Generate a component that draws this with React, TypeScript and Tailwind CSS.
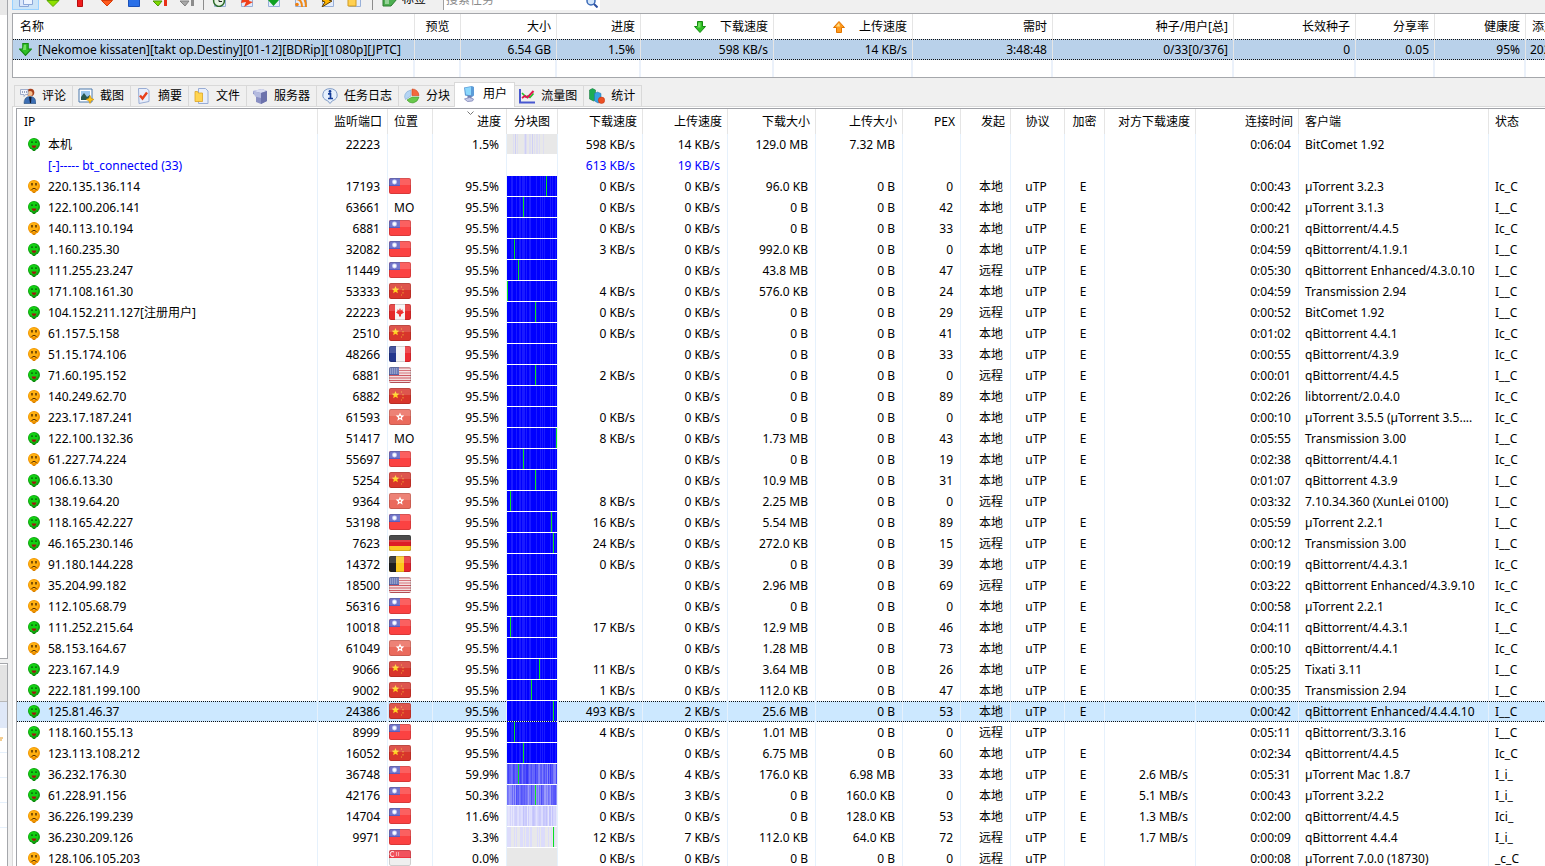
import { useState } from 'react';
import type { ReactNode } from 'react';

interface Peer {
  ip: string;
  happy: boolean;
  port: string;
  loc: string;
  progress: string;
  mark?: number;
  down: string;
  up: string;
  downSize: string;
  upSize: string;
  pex: string;
  origin: string;
  enc: boolean;
  peerDown?: string;
  time: string;
  client: string;
  status: string;
}

type Row = [string, number, string, string, string, number, string, string, string, string, string, string, number, string, string, string, string];

// ip, happy, port, location, progress, mark, down, up, down size, up size, pex, origin, encrypted, peer speed, time, client, status
const ROWS: Row[] = [
  ['220.135.136.114', 0, '17193', 'TW', '95.5', 39, '0', '0', '96.0 KB', '0 B', '0', '本地', 1, '', '0:00:43', 'µTorrent 3.2.3', 'Ic_C'],
  ['122.100.206.141', 1, '63661', 'MO', '95.5', 16, '0', '0', '0 B', '0 B', '42', '本地', 1, '', '0:00:42', 'µTorrent 3.1.3', 'I__C'],
  ['140.113.10.194', 0, '6881', 'TW', '95.5', -1, '0', '0', '0 B', '0 B', '33', '本地', 1, '', '0:00:21', 'qBittorrent/4.4.5', 'Ic_C'],
  ['1.160.235.30', 1, '32082', 'TW', '95.5', 7, '3', '0', '992.0 KB', '0 B', '0', '本地', 1, '', '0:04:59', 'qBittorrent/4.1.9.1', 'I__C'],
  ['111.255.23.247', 1, '11449', 'TW', '95.5', 11, '', '0', '43.8 MB', '0 B', '47', '远程', 1, '', '0:05:30', 'qBittorrent Enhanced/4.3.0.10', 'I__C'],
  ['171.108.161.30', 1, '53333', 'CN', '95.5', 0, '4', '0', '576.0 KB', '0 B', '24', '本地', 1, '', '0:04:59', 'Transmission 2.94', 'I__C'],
  ['104.152.211.127[注册用户]', 1, '22223', 'CA', '95.5', 28, '0', '0', '0 B', '0 B', '29', '远程', 1, '', '0:00:52', 'BitComet 1.92', 'I__C'],
  ['61.157.5.158', 0, '2510', 'CN', '95.5', -1, '0', '0', '0 B', '0 B', '41', '本地', 1, '', '0:01:02', 'qBittorrent 4.4.1', 'Ic_C'],
  ['51.15.174.106', 0, '48266', 'FR', '95.5', -1, '', '0', '0 B', '0 B', '33', '本地', 1, '', '0:00:55', 'qBittorrent/4.3.9', 'Ic_C'],
  ['71.60.195.152', 1, '6881', 'US', '95.5', 28, '2', '0', '0 B', '0 B', '0', '远程', 1, '', '0:00:01', 'qBittorrent/4.4.5', 'I__C'],
  ['140.249.62.70', 0, '6882', 'CN', '95.5', -1, '', '0', '0 B', '0 B', '89', '本地', 1, '', '0:02:26', 'libtorrent/2.0.4.0', 'Ic_C'],
  ['223.17.187.241', 0, '61593', 'HK', '95.5', -1, '0', '0', '0 B', '0 B', '0', '本地', 1, '', '0:00:10', 'µTorrent 3.5.5 (µTorrent 3.5....', 'Ic_C'],
  ['122.100.132.36', 1, '51417', 'MO', '95.5', 49, '8', '0', '1.73 MB', '0 B', '43', '本地', 1, '', '0:05:55', 'Transmission 3.00', 'I__C'],
  ['61.227.74.224', 0, '55697', 'TW', '95.5', 16, '', '0', '0 B', '0 B', '19', '本地', 1, '', '0:02:38', 'qBittorrent/4.4.1', 'Ic_C'],
  ['106.6.13.30', 1, '5254', 'CN', '95.5', 28, '', '0', '10.9 MB', '0 B', '31', '本地', 1, '', '0:01:07', 'qBittorrent 4.3.9', 'I__C'],
  ['138.19.64.20', 1, '9364', 'HK', '95.5', 3, '8', '0', '2.25 MB', '0 B', '0', '远程', 0, '', '0:03:32', '7.10.34.360 (XunLei 0100)', 'I__C'],
  ['118.165.42.227', 1, '53198', 'TW', '95.5', 44, '16', '0', '5.54 MB', '0 B', '89', '本地', 1, '', '0:05:59', 'µTorrent 2.2.1', 'I__C'],
  ['46.165.230.146', 1, '7623', 'DE', '95.5', 46, '24', '0', '272.0 KB', '0 B', '15', '远程', 1, '', '0:00:12', 'Transmission 3.00', 'I__C'],
  ['91.180.144.228', 0, '14372', 'BE', '95.5', -1, '0', '0', '0 B', '0 B', '39', '本地', 1, '', '0:00:19', 'qBittorrent/4.4.3.1', 'Ic_C'],
  ['35.204.99.182', 0, '18500', 'US', '95.5', -1, '', '0', '2.96 MB', '0 B', '69', '远程', 1, '', '0:03:22', 'qBittorrent Enhanced/4.3.9.10', 'Ic_C'],
  ['112.105.68.79', 0, '56316', 'TW', '95.5', -1, '', '0', '0 B', '0 B', '0', '本地', 1, '', '0:00:58', 'µTorrent 2.2.1', 'Ic_C'],
  ['111.252.215.64', 1, '10018', 'TW', '95.5', 3, '17', '0', '12.9 MB', '0 B', '46', '本地', 1, '', '0:04:11', 'qBittorrent/4.4.3.1', 'I__C'],
  ['58.153.164.67', 0, '61049', 'HK', '95.5', -1, '', '0', '1.28 MB', '0 B', '73', '本地', 1, '', '0:00:10', 'qBittorrent/4.4.1', 'Ic_C'],
  ['223.167.14.9', 1, '9066', 'CN', '95.5', 32, '11', '0', '3.64 MB', '0 B', '26', '本地', 1, '', '0:05:25', 'Tixati 3.11', 'I__C'],
  ['222.181.199.100', 1, '9002', 'CN', '95.5', 24, '1', '0', '112.0 KB', '0 B', '47', '本地', 1, '', '0:00:35', 'Transmission 2.94', 'I__C'],
  ['125.81.46.37', 1, '24386', 'CN', '95.5', 46, '493', '2', '25.6 MB', '0 B', '53', '本地', 1, '', '0:00:42', 'qBittorrent Enhanced/4.4.4.10', 'I__C'],
  ['118.160.155.13', 1, '8999', 'TW', '95.5', 7, '4', '0', '1.01 MB', '0 B', '0', '远程', 0, '', '0:05:11', 'qBittorrent/3.3.16', 'I__C'],
  ['123.113.108.212', 0, '16052', 'CN', '95.5', 16, '', '0', '6.75 MB', '0 B', '60', '本地', 1, '', '0:02:34', 'qBittorrent/4.4.5', 'Ic_C'],
  ['36.232.176.30', 1, '36748', 'TW', '59.9', 11, '0', '4', '176.0 KB', '6.98 MB', '33', '本地', 1, '2.6', '0:05:31', 'µTorrent Mac 1.8.7', 'I_i_'],
  ['61.228.91.156', 1, '42176', 'TW', '50.3', 28, '0', '3', '0 B', '160.0 KB', '0', '本地', 1, '5.1', '0:00:43', 'µTorrent 3.2.2', 'I_i_'],
  ['36.226.199.239', 0, '14704', 'TW', '11.6', -1, '0', '0', '0 B', '128.0 KB', '53', '本地', 1, '1.3', '0:02:00', 'qBittorrent/4.4.5', 'Ici_'],
  ['36.230.209.126', 1, '9971', 'TW', '3.3', 46, '12', '7', '112.0 KB', '64.0 KB', '72', '远程', 1, '1.7', '0:00:09', 'qBittorrent 4.4.4', 'I_i_'],
  ['128.106.105.203', 0, '', 'SG', '0.0', -1, '0', '0', '0 B', '0 B', '0', '远程', 0, '', '0:00:08', 'µTorrent 7.0.0 (18730)', '_c_C'],
];

const PEERS: Peer[] = ROWS.map((r) => ({
  ip: r[0],
  happy: r[1] === 1,
  port: r[2],
  loc: r[3],
  progress: r[4],
  mark: r[5] >= 0 ? r[5] : undefined,
  down: r[6] && `${r[6]} KB/s`,
  up: `${r[7]} KB/s`,
  downSize: r[8],
  upSize: r[9],
  pex: r[10],
  origin: r[11],
  enc: r[12] === 1,
  peerDown: r[13] && `${r[13]} MB/s`,
  time: r[14],
  client: r[15],
  status: r[16],
}));

const DOTTED =
  'bg-[image:repeating-linear-gradient(90deg,#111_0_1px,transparent_1px_2px),repeating-linear-gradient(90deg,#111_0_1px,transparent_1px_2px)] bg-[length:100%_1px] bg-[position:0_0,0_100%] bg-no-repeat';

function Face({ happy }: { happy: boolean }) {
  return (
    <svg width="12" height="14" viewBox="0 0 12 14" className="shrink-0">
      <path d="M3 10h6l-2 3H5z" fill={happy ? '#0c8a0c' : '#d98200'} />
      <circle cx="6" cy="6" r="6" fill={happy ? '#0fa00f' : '#f09400'} />
      <circle cx="5.5" cy="5.5" r="4.8" fill={happy ? '#12d012' : '#ffb010'} />
      {happy ? (
        <>
          <path d="M3.200 4.200h1.600M7.200 4.200h1.600" stroke="#064806" strokeWidth="1.200" />
          <path d="M3.500 7.500h5q-.6 2.600-2.500 2.600T3.500 7.500z" fill="#a01414" />
        </>
      ) : (
        <>
          <path d="M4 3v2.500M8 3v2.500" stroke="#4a2a00" strokeWidth="1.4" />
          <path d="M3.500 9.5q2.500-2.500 5 0" stroke="#5a3000" fill="none" />
        </>
      )}
    </svg>
  );
}

function Star({ x, y, r, fill }: { x: number; y: number; r: number; fill: string }) {
  const pts = Array.from({ length: 10 }, (_, i) => {
    const a = (i * Math.PI) / 5 - Math.PI / 2;
    const d = i % 2 ? r * 0.45 : r;
    return `${(x + d * Math.cos(a)).toFixed(2)},${(y + d * Math.sin(a)).toFixed(2)}`;
  });
  return <polygon points={pts.join(' ')} fill={fill} />;
}

const FLAGS: Record<string, ReactNode> = {
  TW: (
    <>
      <rect width="22" height="16" fill="#fb4242" />
      <rect width="11" height="8" fill="#5a5cc0" />
      <circle cx="5.5" cy="4" r="2.4" fill="#c9cff5" />
      <circle cx="5.5" cy="4" r="1.4" fill="#fff" />
    </>
  ),
  CN: (
    <>
      <rect width="22" height="16" fill="#d8352b" />
      <Star x={6.5} y={7} r={4} fill="#ffd21f" />
      <path d="M12 4h1M14 6v1.500M14 9v1.500M12 12h1" stroke="#f0a030" fill="none" />
    </>
  ),
  CA: (
    <>
      <rect width="22" height="16" fill="#e42a2a" />
      <rect x="6" width="10" height="16" fill="#f6f6f6" />
      <path d="M11 4l1 2 2-.5-.5 1.500 1.500 1.500-3 2v2h-2v-2l-3-2 1.500-1.500L8 5.500l2 .5z" fill="#ee3333" />
    </>
  ),
  FR: (
    <>
      <rect width="22" height="16" fill="#f4f4f4" />
      <rect width="7" height="16" fill="#23368c" />
      <rect x="16" width="6" height="16" fill="#ec2b32" />
    </>
  ),
  US: (
    <>
      <rect width="22" height="16" fill="#f3dede" />
      <path d="M0 1h22M0 3.500h22M0 6h22M0 8.500h22M0 11h22M0 13.500h22M0 15.500h22" stroke="#cf5a62" />
      <rect width="10" height="8" fill="#5566aa" />
      <path d="M1 2h8M1 4h8M1 6h8" stroke="#a9b3da" strokeDasharray="1 1" />
    </>
  ),
  HK: (
    <>
      <rect width="22" height="16" fill="#ea6a5c" />
      <Star x={11} y={8} r={4.5} fill="#fff" />
      <circle cx="11" cy="8" r="1" fill="#ea6a5c" />
    </>
  ),
  DE: (
    <>
      <rect width="22" height="16" fill="#2a2a2a" />
      <rect y="5" width="22" height="6" fill="#dd1f26" />
      <rect y="11" width="22" height="5" fill="#fbc924" />
    </>
  ),
  BE: (
    <>
      <rect width="22" height="16" fill="#fcc81c" />
      <rect width="7" height="16" fill="#1f1f1f" />
      <rect x="15" width="7" height="16" fill="#e5252f" />
    </>
  ),
  SG: (
    <>
      <rect width="22" height="16" fill="#efefef" />
      <rect width="22" height="8" fill="#ef3340" />
      <path d="M5 2a2.500 2.500 0 1 0 0 4" stroke="#fff" fill="none" />
      <path d="M7 3h1M9 3h1M7 5h1M9 5h1" stroke="#fff" />
    </>
  ),
};

function Flag({ code }: { code: string }) {
  return (
    <svg width="22" height="16" viewBox="0 0 22 16" className="rounded-xs">
      {FLAGS[code]}
      <rect width="22" height="7" fill="#fff" opacity="0.16" />
      <rect x="0.500" y="0.500" width="21" height="15" rx="1.500" fill="none" stroke="#000" opacity="0.14" />
    </svg>
  );
}

const COMMON = [4, 5, 9, 12, 13, 15, 16, 17, 19, 22, 23, 29, 33, 35, 37, 43, 45, 48];

function PieceMap({ percent, seed, mark }: { percent: number; seed: number; mark?: number }) {
  const cols = Array.from({ length: 50 }, (_, i) => {
    const n = Math.abs(Math.sin((i + 1) * 12.9898 + seed * 78.233) * 43758.5453) % 1;
    if (percent === 0) return '#e8e8e8';
    if (percent > 90) return COMMON.includes(i) ? '#1a1aff' : '#0000ff';
    if (percent > 40) {
      const v = Math.round((1 - percent / 100) * 235 + (n - 0.5) * 80);
      return `rgb(${v},${v},250)`;
    }
    if (percent > 10) {
      const v = Math.round(212 + (n - 0.5) * 40);
      return `rgb(${v},${v},252)`;
    }
    if (percent > 2) return n > 0.45 ? '#dcdcfb' : '#e8e8ea';
    return n > 0.88 ? '#cfcff6' : n > 0.7 ? '#dedef2' : '#e8e8e8';
  });
  return (
    <svg width="50" height="20" viewBox="0 0 50 20" shapeRendering="crispEdges" className="block">
      {cols.map((c, i) => (
        <rect key={i} x={i} width="1" height="20" fill={c} />
      ))}
      {mark !== undefined && <rect x={mark} width="1" height="20" fill="#0be020" />}
    </svg>
  );
}

function DownArrow({ size }: { size: number }) {
  return (
    <svg width={size} height={size} viewBox="0 0 12 12" className="shrink-0">
      <path d="M3.500.5h5v5h3L6 11.500.5 5.500h3z" fill="#2fbf24" stroke="#168a12" />
      <path d="M4.500 1.500h2v5h-3z" fill="#8ff07c" opacity="0.7" />
    </svg>
  );
}

function UpArrow() {
  return (
    <svg width="12" height="12" viewBox="0 0 12 12" className="shrink-0">
      <path d="M3.500 11.500h5v-5h3L6 .5.5 6.500h3z" fill="#ff9a1c" stroke="#e07400" />
      <path d="M6 2L3 5.500h4z" fill="#ffe08a" />
    </svg>
  );
}

function Icon({ children }: { children: ReactNode }) {
  return (
    <svg width="16" height="16" viewBox="0 0 16 16" className="shrink-0">
      {children}
    </svg>
  );
}

const page = <path d="M2.500.5h9l2 2v13h-11z" fill="#e4ecfb" stroke="#98b0d8" />;

const TOOLS: { name: string; icon: ReactNode; active?: boolean }[] = [
  { name: '新建', active: true, icon: <><path d="M1.500 1.500h9v14h-9z" fill="#dbe7fb" stroke="#8ba6d8" /><path d="M5.500.5h9v13h-9z" fill="#eef4ff" stroke="#8ba6d8" /></> },
  { name: '开始', icon: <path d="M2 9.500h12L8 15.500z" fill="#8ee000" stroke="#5aa800" /> },
  { name: '暂停', icon: <path d="M5.500 2.500h5v13h-5z" fill="#ee1c1c" stroke="#b80c0c" /> },
  { name: '停止', icon: <path d="M2.500 9.500h11l-5.500 5.500z" fill="#ff5a1c" stroke="#d83a08" /> },
  { name: '方块', icon: <path d="M2.500 5.500h11v10h-11z" fill="#2a70e8" stroke="#1a50b8" /> },
  { name: '全部开始', icon: <><path d="M0 10h9l-4 5z" fill="#7ed800" stroke="#4a9800" /><path d="M11 6h3v9h-3z" fill="#e83018" /></> },
  { name: '全部停止', icon: <><path d="M0 10h9l-4 5z" fill="#a8a8a8" stroke="#808080" /><path d="M11 6h3v9h-3z" fill="#8c8c8c" /></> },
];

const TOOLS_2: { name: string; icon: ReactNode }[] = [
  { name: '计划', icon: <>{page}<circle cx="7" cy="10" r="5.400" fill="#e8f4e4" stroke="#2a6a28" strokeWidth="1.500" /><path d="M7 7v3.500h3" stroke="#222" fill="none" /></> },
  { name: '热门', icon: <>{page}<path d="M4 5l8 1-2 4 4 1-9 5 2-5-5 1z" fill="#f0401c" /></> },
  { name: '完成', icon: <>{page}<path d="M2 9h3V5h5v4h3l-5.500 6z" fill="#10a020" /></> },
  { name: '订阅', icon: <>{page}<circle cx="4" cy="13.500" r="1.800" fill="#f08010" /><path d="M3 8q6 0 6 8M3 4q10 0 10 12" stroke="#f08a18" fill="none" strokeWidth="2" /></> },
  { name: '快速', icon: <>{page}<path d="M10 3l3 4-4 2 3 1-10 6 3-5-3-1z" fill="#ffb400" stroke="#604000" /></> },
  { name: '目录', icon: <>{page}<path d="M1 6h7l1 2v7H1z" fill="#ffd050" stroke="#d09a20" /></> },
];

const TABS: { name: string; icon: ReactNode }[] = [
  {
    name: '评论',
    icon: (
      <>
        <circle cx="10.500" cy="4.500" r="3.800" fill="#a8401c" />
        <circle cx="10" cy="5.500" r="2.500" fill="#f4c090" />
        <path d="M.5 1.500h7.500v5H5.500L4 8.500v-2H.5z" fill="#f4f6fc" stroke="#8c9cc0" strokeWidth=".8" />
        <path d="M2 4h1M4 4h1M6 4h1" stroke="#405080" />
        <path d="M4 15.500q0-7 6-7t6 7z" fill="#3c6eb4" stroke="#204878" strokeWidth=".6" />
        <path d="M9 9h2.500l-.5 6h-1z" fill="#101830" />
      </>
    ),
  },
  {
    name: '截图',
    icon: (
      <>
        <path d="M1 1h13v13H1z" fill="#fff" stroke="#4a78ac" />
        <path d="M3 3h9v9H3z" fill="#9cc8ec" />
        <path d="M3 9l3-4 3 4 3-2v5H3z" fill="#2a5a50" />
        <path d="M12 7.500l1.200 2.800 2.800 1.200-2.800 1.200L12 15.500l-1.200-2.800L8 11.500l2.800-1.200z" fill="#ffc81c" stroke="#d08c00" strokeWidth=".6" />
      </>
    ),
  },
  {
    name: '摘要',
    icon: (
      <>
        <path d="M2.500.5h8l2.500 2v11l-10 2z" fill="#e8eefb" stroke="#98acd4" />
        <path d="M4 7.500l2.500 3L11 4.500" stroke="#e8401c" strokeWidth="2.400" fill="none" />
      </>
    ),
  },
  {
    name: '文件',
    icon: (
      <>
        <path d="M4.500.5h7l2.500 2.500v12.500h-9.500z" fill="#e8eefb" stroke="#98acd4" />
        <path d="M1 3.500h2.500l.8 1.500h4.200v8.500H1z" fill="#ffd450" stroke="#dca424" strokeWidth=".8" />
      </>
    ),
  },
  {
    name: '服务器',
    icon: (
      <>
        <path d="M1 3l9-2 5 2v10l-6 3-5-2V7L1 6z" fill="#8a90c4" />
        <path d="M1 3l9-2 5 2-6 2z" fill="#d8dcf2" />
        <path d="M1 3l8 2v5L3 8.500z" fill="#b4badf" />
        <path d="M9 5l6-2v10l-6 3z" fill="#6c72ac" />
      </>
    ),
  },
  {
    name: '任务日志',
    icon: (
      <>
        <path d="M8 .7a7.200 6.200 0 0 1 2.500 12L8 15.500l-2.500-2.800A7.200 6.200 0 0 1 8 .7z" fill="#e6f0fd" stroke="#7c98c4" />
        <circle cx="8" cy="3.500" r="1.400" fill="#143c98" />
        <path d="M6 5.800h2.500v4.400M6 10.500h5" stroke="#143c98" strokeWidth="1.700" fill="none" />
      </>
    ),
  },
  {
    name: '分块',
    icon: (
      <>
        <path d="M7 2v6l-5.500 3.500Q0 9 1 6.500 2 3 7 2z" fill="#b4d4f4" stroke="#7ca8d4" strokeWidth=".6" />
        <path d="M8 1q6 0 7 6.500H8z" fill="#f4683c" stroke="#cc4018" strokeWidth=".6" />
        <path d="M8 9h7q-1 5-6 6-4 0-6-3z" fill="#68c84c" stroke="#3c9828" strokeWidth=".6" />
      </>
    ),
  },
  {
    name: '用户',
    icon: (
      <>
        <path d="M3 1.500L11 0l2 1v8.500L11 11 4 9.500z" fill="#5c9cd8" />
        <path d="M4 2l6-1v8.500L5 8.500z" fill="#8cd8fc" />
        <path d="M6.500 9.500h4v2.500h-4z" fill="#7080b0" />
        <path d="M3.500 13l5-1.500 4 1.500-1 2-5 .5z" fill="#c4cae8" stroke="#7c84b8" strokeWidth=".8" />
      </>
    ),
  },
  {
    name: '流量图',
    icon: (
      <>
        <path d="M1 1v13.500h15" stroke="#4858d0" strokeWidth="2" fill="none" />
        <path d="M3 5l4 4 2-1 2 1.500 3.500-4" stroke="#20c428" strokeWidth="1.600" fill="none" />
        <path d="M3 10l3-2 2.500 1.500L14.500 3" stroke="#e01850" strokeWidth="2" fill="none" />
      </>
    ),
  },
  {
    name: '统计',
    icon: (
      <>
        <path d="M.5 2l3-1.500 3 1.500v10l-2 1-4-2z" fill="#1cac54" stroke="#107034" strokeWidth=".5" />
        <path d="M5.500 5.500l3-1.500 3.500 1.500v8.500l-3 1-3.500-2z" fill="#38a0e0" stroke="#1c70ac" strokeWidth=".5" />
        <circle cx="12.500" cy="12.300" r="3.200" fill="#ec5024" stroke="#b83010" strokeWidth=".5" />
      </>
    ),
  },
];

const PEER_HEAD = 'relative h-[25px] border-r border-[#e5e5e5] p-0 font-normal whitespace-nowrap';
const CELL = 'h-[21px] overflow-hidden border-r border-[#e6f1fc] p-0 whitespace-nowrap';
const NUM = `${CELL} pr-[7px] text-right`;
const TASK_HEAD = 'h-[25px] border-r border-[#e5e5e5] p-0 font-normal whitespace-nowrap';
const TASK_NUM = 'h-[21px] border-r border-[#e5e5e5] p-0 pr-[5px] text-right whitespace-nowrap';

function TaskTable() {
  return (
    <div className="shrink-0 overflow-hidden border-y border-l border-[#a5a7ab] bg-white">
      <table className="w-full table-fixed border-separate border-spacing-0">
        <colgroup>
          <col className="w-[402px]" />
          <col className="w-[46px]" />
          <col className="w-[96px]" />
          <col className="w-[84px]" />
          <col className="w-[133px]" />
          <col className="w-[139px]" />
          <col className="w-[140px]" />
          <col className="w-[181px]" />
          <col className="w-[122px]" />
          <col className="w-[79px]" />
          <col className="w-[91px]" />
          <col />
        </colgroup>
        <thead>
          <tr>
            <th className={`${TASK_HEAD} pl-[7px] text-left`}>名称</th>
            <th className={`${TASK_HEAD} text-center`}>预览</th>
            <th className={`${TASK_HEAD} pr-[5px] text-right`}>大小</th>
            <th className={`${TASK_HEAD} pr-[5px] text-right`}>进度</th>
            <th className={`${TASK_HEAD} pr-[5px]`}>
              <span className="flex items-center justify-end gap-[14px]">
                <DownArrow size={12} />
                下载速度
              </span>
            </th>
            <th className={`${TASK_HEAD} pr-[5px]`}>
              <span className="flex items-center justify-end gap-[14px]">
                <UpArrow />
                上传速度
              </span>
            </th>
            <th className={`${TASK_HEAD} pr-[5px] text-right`}>需时</th>
            <th className={`${TASK_HEAD} pr-[5px] text-right`}>种子/用户[总]</th>
            <th className={`${TASK_HEAD} pr-[5px] text-right`}>长效种子</th>
            <th className={`${TASK_HEAD} pr-[5px] text-right`}>分享率</th>
            <th className={`${TASK_HEAD} pr-[5px] text-right`}>健康度</th>
            <th className="overflow-hidden p-0 pl-[6px] text-left font-normal whitespace-nowrap">添加</th>
          </tr>
        </thead>
        <tbody>
          <tr className={`bg-[#b9d1ea] ${DOTTED}`}>
            <td className="h-[21px] overflow-hidden border-r border-[#e5e5e5] p-0 pl-[6px] whitespace-nowrap">
              <span className="flex items-center gap-[6px]">
                <DownArrow size={13} />
                [Nekomoe kissaten][takt op.Destiny][01-12][BDRip][1080p][JPTC]
              </span>
            </td>
            <td className={TASK_NUM} />
            <td className={TASK_NUM}>6.54 GB</td>
            <td className={TASK_NUM}>1.5%</td>
            <td className={TASK_NUM}>598 KB/s</td>
            <td className={TASK_NUM}>14 KB/s</td>
            <td className={TASK_NUM}>3:48:48</td>
            <td className={TASK_NUM}>0/33[0/376]</td>
            <td className={TASK_NUM}>0</td>
            <td className={TASK_NUM}>0.05</td>
            <td className={TASK_NUM}>95%</td>
            <td className="overflow-hidden p-0 pl-1 whitespace-nowrap">2022</td>
          </tr>
          <tr>
            {Array.from({ length: 11 }, (_, i) => (
              <td key={i} className="h-[17px] border-r-2 border-[#ebf1fa] p-0" />
            ))}
            <td />
          </tr>
        </tbody>
      </table>
    </div>
  );
}

function PeerTable() {
  const [open, setOpen] = useState(true);
  const [selected, setSelected] = useState('125.81.46.37');

  return (
    <div className="min-h-0 flex-1 overflow-hidden border-t border-l border-[#a0a2a8] bg-white">
      <table className="w-full table-fixed border-separate border-spacing-0">
        <colgroup>
          <col className="w-[301px]" />
          <col className="w-[70px]" />
          <col className="w-[45px]" />
          <col className="w-[74px]" />
          <col className="w-[51px]" />
          <col className="w-[85px]" />
          <col className="w-[85px]" />
          <col className="w-[88px]" />
          <col className="w-[87px]" />
          <col className="w-[58px]" />
          <col className="w-[50px]" />
          <col className="w-[54px]" />
          <col className="w-[40px]" />
          <col className="w-[91px]" />
          <col className="w-[103px]" />
          <col className="w-[190px]" />
          <col />
        </colgroup>
        <thead>
          <tr>
            <th className={`${PEER_HEAD} pl-[7px] text-left`}>IP</th>
            <th className={`${PEER_HEAD} pr-[5px] text-right`}>监听端口</th>
            <th className={`${PEER_HEAD} pl-[6px] text-left`}>位置</th>
            <th className={`${PEER_HEAD} pr-[5px] text-right`}>
              <svg width="7" height="4" viewBox="0 0 7 4" className="absolute top-[2px] left-[34px]">
                <path d="M.5.5l3 3 3-3" stroke="#777" fill="none" />
              </svg>
              进度
            </th>
            <th className={`${PEER_HEAD} text-center`}>分块图</th>
            <th className={`${PEER_HEAD} pr-[5px] text-right`}>下载速度</th>
            <th className={`${PEER_HEAD} pr-[5px] text-right`}>上传速度</th>
            <th className={`${PEER_HEAD} pr-[5px] text-right`}>下载大小</th>
            <th className={`${PEER_HEAD} pr-[5px] text-right`}>上传大小</th>
            <th className={`${PEER_HEAD} pr-[5px] text-right`}>PEX</th>
            <th className={`${PEER_HEAD} pr-[5px] text-right`}>发起</th>
            <th className={`${PEER_HEAD} text-center`}>协议</th>
            <th className={`${PEER_HEAD} text-center`}>加密</th>
            <th className={`${PEER_HEAD} pr-[5px] text-right`}>对方下载速度</th>
            <th className={`${PEER_HEAD} pr-[5px] text-right`}>连接时间</th>
            <th className={`${PEER_HEAD} pl-[6px] text-left`}>客户端</th>
            <th className="p-0 pl-[6px] text-left font-normal whitespace-nowrap">状态</th>
          </tr>
        </thead>
        <tbody>
          <tr>
            <td className={`${CELL} pl-[11px]`}>
              <span className="flex items-center gap-2">
                <Face happy />
                本机
              </span>
            </td>
            <td className={NUM}>22223</td>
            <td className={CELL} />
            <td className={NUM}>1.5%</td>
            <td className={`${CELL} align-top`}>
              <PieceMap percent={1.5} seed={3} />
            </td>
            <td className={NUM}>598 KB/s</td>
            <td className={NUM}>14 KB/s</td>
            <td className={NUM}>129.0 MB</td>
            <td className={NUM}>7.32 MB</td>
            <td className={NUM} />
            <td className={NUM} />
            <td className={NUM} />
            <td className={NUM} />
            <td className={NUM} />
            <td className={NUM}>0:06:04</td>
            <td className={`${CELL} pl-[6px]`}>BitComet 1.92</td>
            <td />
          </tr>
          <tr className="text-[#0000ff]">
            <td className={`${CELL} pl-[31px]`}>
              <button type="button" className="block" onClick={() => setOpen(!open)}>
                {open ? '[-]-----' : '[+]-----'} bt_connected (33)
              </button>
            </td>
            <td className={NUM} />
            <td className={NUM} />
            <td className={NUM} />
            <td className={NUM} />
            <td className={NUM}>613 KB/s</td>
            <td className={NUM}>19 KB/s</td>
            {Array.from({ length: 9 }, (_, i) => (
              <td key={i} className={CELL} />
            ))}
            <td />
          </tr>
          {open &&
            PEERS.map((p, i) => (
              <tr key={p.ip} onClick={() => setSelected(p.ip)} className={p.ip === selected ? `bg-[#cce8ff] ${DOTTED}` : ''}>
                <td className={`${CELL} pl-[11px]`}>
                  <span className="flex items-center gap-2">
                    <Face happy={p.happy} />
                    {p.ip}
                  </span>
                </td>
                <td className={NUM}>{p.port}</td>
                {FLAGS[p.loc] ? (
                  <td className={`${CELL} pt-[2px] pl-px align-top`}>
                    <Flag code={p.loc} />
                  </td>
                ) : (
                  <td className={`${CELL} pl-[6px]`}>{p.loc}</td>
                )}
                <td className={NUM}>{p.progress}%</td>
                <td className={`${CELL} align-top`}>
                  <PieceMap percent={Number(p.progress)} seed={i} mark={p.mark} />
                </td>
                <td className={NUM}>{p.down}</td>
                <td className={NUM}>{p.up}</td>
                <td className={NUM}>{p.downSize}</td>
                <td className={NUM}>{p.upSize}</td>
                <td className={NUM}>{p.pex}</td>
                <td className={NUM}>{p.origin}</td>
                <td className={`${CELL} pr-[3px] text-center`}>uTP</td>
                <td className={`${CELL} pr-[3px] text-center`}>{p.enc && 'E'}</td>
                <td className={NUM}>{p.peerDown}</td>
                <td className={NUM}>{p.time}</td>
                <td className={`${CELL} pl-[6px]`}>{p.client}</td>
                <td className="p-0 pl-[6px] whitespace-nowrap">{p.status}</td>
              </tr>
            ))}
        </tbody>
      </table>
    </div>
  );
}

export default function App() {
  const [tab, setTab] = useState('用户');

  return (
    <div className="flex h-screen overflow-hidden bg-[#f0f0f0] font-['Noto_Sans','Noto_Sans_CJK_SC',sans-serif] text-[12px] leading-4 text-black">
      <aside className="flex w-2 shrink-0 flex-col">
        <div className="h-[15px] shrink-0 border-r border-[#a5a7ab] bg-[#e8e8e8]" />
        <div className="h-[644px] shrink-0 border-r border-b border-[#a5a7ab] bg-white" />
        <div className="mt-1 flex flex-1 flex-col border-t border-r border-[#a5a7ab] bg-white">
          <div className="mt-px h-[37px] shrink-0 border-b border-[#b8b8b8] bg-[#e3e3e3]" />
          <div className="h-[26px] shrink-0 bg-[#dfe8f8]" />
          <div className="flex h-[25px] shrink-0 items-center border-b border-[#e6f1fc]">
            <svg width="3" height="6" viewBox="0 0 3 6">
              <path d="M0 1h3M0 3h2" stroke="#e89a20" />
            </svg>
          </div>
          <div className="h-[25px] shrink-0 border-b border-[#e6f1fc]" />
          <div className="h-[25px] shrink-0 border-b border-[#e6f1fc]" />
          <div className="h-[25px] shrink-0 border-b border-[#e6f1fc]" />
        </div>
      </aside>

      <div className="ml-1 flex min-w-0 flex-1 flex-col">
        <div className="flex h-[13px] shrink-0 items-end overflow-hidden pb-[3px]">
          {TOOLS.map((t) => (
            <button
              key={t.name}
              type="button"
              aria-label={t.name}
              className={`flex h-[25px] w-[27px] shrink-0 items-end justify-center border pb-[2px] ${t.active ? 'border-[#99d1ff] bg-[#cce4f7]' : 'border-transparent'}`}
            >
              <Icon>{t.icon}</Icon>
            </button>
          ))}
          <div className="mx-[2px] h-[25px] w-px shrink-0 bg-[#8c8c8c]" />
          {TOOLS_2.map((t) => (
            <button key={t.name} type="button" aria-label={t.name} className="flex h-[25px] w-[27px] shrink-0 items-end justify-center pb-[3px]">
              <Icon>{t.icon}</Icon>
            </button>
          ))}
          <div className="mr-[9px] ml-[4px] h-[25px] w-px shrink-0 bg-[#8c8c8c]" />
          <button type="button" className="flex h-[25px] shrink-0 items-end gap-1 pb-[3px]">
            <Icon>
              <path d="M1 3h9l5 5-6 7H1z" fill="#4caf50" stroke="#2c7c30" />
              <path d="M4 6v7M6 6v7" stroke="#e0f4e0" />
            </Icon>
            标签
          </button>
          <label className="ml-[17px] flex h-[25px] w-[157px] shrink-0 items-end border-l border-[#a0a0a0] bg-white pr-[2px] pb-[2px] pl-[2px]">
            <input type="text" aria-label="搜索任务" placeholder="搜索任务" className="h-4 min-w-0 flex-1 bg-transparent outline-none placeholder:text-[#8a8a8a]" />
            <svg width="12" height="16" viewBox="0 0 12 16" className="shrink-0">
              <circle cx="5" cy="9" r="4" fill="#d4e6fa" stroke="#3a6ab8" strokeWidth="1.500" />
              <path d="M8 12l3.500 3.500" stroke="#2c50a0" strokeWidth="2" />
            </svg>
          </label>
        </div>

        <TaskTable />

        <div role="tablist" className="flex h-[28px] shrink-0 items-end pl-[2px]">
          {TABS.map((t, i) => (
            <button
              key={t.name}
              type="button"
              role="tab"
              aria-selected={t.name === tab}
              onClick={() => setTab(t.name)}
              className={`flex shrink-0 items-center gap-[6px] border-t border-[#d9d9d9] ${
                t.name === tab
                  ? 'z-10 -mx-[2px] -mb-px h-[25px] border-x bg-white pr-[7px] pb-[3px] pl-[6px]'
                  : `h-[21px] border-l pr-[6px] pl-[5px] ${i === TABS.length - 1 ? 'border-r' : ''}`
              }`}
            >
              <Icon>{t.icon}</Icon>
              {t.name}
            </button>
          ))}
        </div>

        <div role="tabpanel" aria-label={tab} className="flex min-h-0 flex-1 flex-col border-t border-l border-[#d9d9d9] bg-white pt-px pl-[3px]">
          <PeerTable />
        </div>
      </div>
    </div>
  );
}
